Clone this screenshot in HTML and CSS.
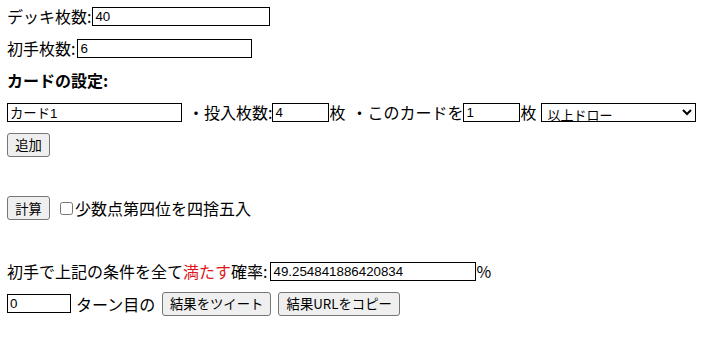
FILE: index.html
```html
<!DOCTYPE html>
<html lang="ja">
<head>
<meta charset="utf-8">
<link rel="stylesheet" href="styles.css">
</head>
<body>
<div class="page">
  <div class="row r1"><span>デッキ枚数:</span><input class="field w-deck" value="40"></div>
  <div class="row r2"><span>初手枚数:</span><input class="field w-hand" value="6"></div>
  <div class="row r3"><b>カードの設定:</b></div>
  <div class="row r4">
    <input class="field w-name" value="カード1">
    <span class="sp">・投入枚数:</span><input class="field w-num" value="4"><span>枚</span>
    <span class="sp">・このカードを</span><input class="field w-num" value="1"><span>枚</span>
    <select class="sel"><option>以上ドロー</option></select>
  </div>
  <div class="row r5"><button class="btn">追加</button></div>
  <div class="row r6"><button class="btn">計算</button><label class="chk"><input type="checkbox"><span>少数点第四位を四捨五入</span></label></div>
  <div class="row r7"><span>初手で上記の条件を全て<span class="red">満たす</span>確率:</span><input class="field w-prob" value="49.254841886420834"><span>%</span></div>
  <div class="row r8"><input class="field w-turn" value="0"><span class="sp2">ターン目の</span><button class="btn b-tweet">結果をツイート</button><button class="btn b-copy">結果URLをコピー</button></div>
</div>
</body>
</html>
```
FILE: styles.css
```css
html, body { margin: 0; padding: 0; background: #fff; }
body {
  font-family: "Noto Sans CJK JP", "Liberation Sans", sans-serif;
  font-size: 16px;
  color: #000;
}
.page { padding: 0 7px; display: flex; flex-direction: column; }
.row { display: flex; align-items: center; height: 32px; white-space: nowrap; }
.r5 { height: 33px; }
.r6 { margin-top: 31px; }
.r7 { margin-top: 31px; }
.r8 { height: 33px; }
.sp { margin-left: 6px; }
.sp2 { margin-left: 5px; }
.field {
  box-sizing: border-box;
  height: 19px;
  border: 1px solid #000;
  padding: 0 2px;
  margin: 0;
  font-family: "Liberation Sans", "Noto Sans CJK JP", sans-serif;
  font-size: 13.33px;
  color: #000;
  background: #fff;
  outline: none;
}
.w-deck { width: 178px; margin-left: 1px; }
.w-hand { width: 175px; margin-left: 2px; }
.w-name { width: 175px; }
.w-num { width: 57px; }
.w-prob { width: 206px; margin-left: 3px; }
.w-turn { width: 64px; }
.sel {
  box-sizing: border-box;
  width: 157px;
  height: 19px;
  margin-left: 4px;
  border: 1px solid #000;
  border-radius: 0;
  font-family: "Noto Sans CJK JP", sans-serif;
  font-size: 13px;
  padding: 0 2px;
  background: #fff;
  color: #000;
}
.btn {
  box-sizing: border-box;
  height: 24px;
  padding: 0 6px;
  margin: 0;
  border: 1px solid #767676;
  border-radius: 3px;
  background: #efefef;
  font-family: "Noto Sans CJK JP", sans-serif;
  font-size: 13.33px;
  color: #000;
}
.r5 .btn, .r6 .btn { width: 43px; padding: 0; }
.b-tweet { width: 109px; margin-left: 7px; }
.b-copy { width: 122px; margin-left: 7px; }
.chk { display: flex; align-items: center; margin-left: 10px; }
.chk input {
  margin: 0 2px 0 0;
  width: 13px;
  height: 13px;
}
.red { color: #e0161b; }
```
